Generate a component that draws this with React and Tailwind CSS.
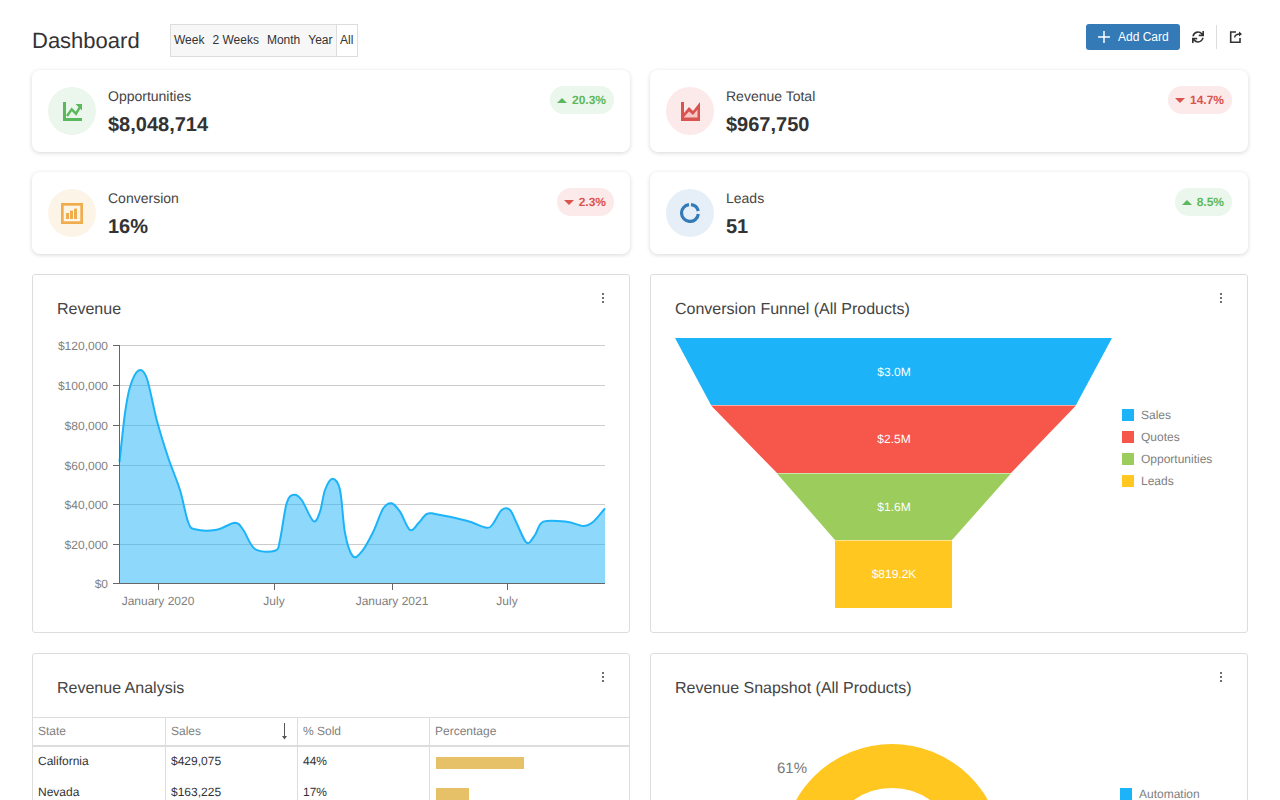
import React from 'react';
import { FaSync } from 'react-icons/fa';

const stats = [
  [
    { label: 'Opportunities', value: '$8,048,714', change: '20.3%', up: true, circle: 'bg-[#ebf6ec]', icon: <TrendIcon /> },
    { label: 'Revenue Total', value: '$967,750', change: '14.7%', up: false, circle: 'bg-[#fce9e9]', icon: <AreaIcon /> },
  ],
  [
    { label: 'Conversion', value: '16%', change: '2.3%', up: false, circle: 'bg-[#fdf4e8]', icon: <BarsIcon /> },
    { label: 'Leads', value: '51', change: '8.5%', up: true, circle: 'bg-[#e6eff7]', icon: <RingIcon /> },
  ],
];

// traced from the revenue series, page coordinates
const curve = [
  [119.5, 462], [125, 413], [130, 387], [138.3, 370.7], [146.7, 378], [156.7, 420], [168.3, 458], [180, 490],
  [188, 521.7], [195, 529.3], [216.7, 529.7], [235, 522.7], [243.3, 530], [255, 549], [275, 550.7], [280, 540],
  [286.7, 503], [294, 494.7], [301.7, 500], [313.3, 521], [320, 511.7], [325, 490], [332.5, 478.7], [340, 490],
  [345, 533], [352.7, 556], [361.7, 551.7], [373.3, 531.7], [383.3, 508.3], [391.7, 503.3], [400, 511.7],
  [410, 530], [418.3, 523.3], [426.7, 514], [435, 514], [466.7, 520.7], [486.7, 527.7], [493.3, 523.3],
  [501.7, 510], [510, 510], [516.7, 523.3], [526.7, 542.7], [535, 535], [543.3, 521.7], [566.7, 521.7],
  [583.3, 526], [593.3, 521.7], [605, 508.3],
];

function smooth(points) {
  let d = `M${points[0][0]} ${points[0][1]}`;
  for (let i = 0; i < points.length - 1; i++) {
    const p0 = points[i - 1] || points[i];
    const p1 = points[i];
    const p2 = points[i + 1];
    const p3 = points[i + 2] || p2;
    const c1 = [p1[0] + (p2[0] - p0[0]) / 6, p1[1] + (p2[1] - p0[1]) / 6];
    const c2 = [p2[0] - (p3[0] - p1[0]) / 6, p2[1] - (p3[1] - p1[1]) / 6];
    d += `C${c1[0].toFixed(1)} ${c1[1].toFixed(1)} ${c2[0].toFixed(1)} ${c2[1].toFixed(1)} ${p2[0]} ${p2[1]}`;
  }
  return d;
}

const yTicks = [
  ['$120,000', 345.5], ['$100,000', 385.5], ['$80,000', 425.5], ['$60,000', 465.5], ['$40,000', 504.5], ['$20,000', 544.5], ['$0', 583.5],
];
const xTicks = [['January 2020', 158.5], ['July', 274.5], ['January 2021', 392.5], ['July', 507.5]];

const funnelLegend = [
  ['Sales', 'bg-[#1db3f8]'],
  ['Quotes', 'bg-[#f6574a]'],
  ['Opportunities', 'bg-[#9ccc5c]'],
  ['Leads', 'bg-[#ffc720]'],
];

const rows = [
  { state: 'California', sales: '$429,075', sold: '44%', bar: 'w-[88px]' },
  { state: 'Nevada', sales: '$163,225', sold: '17%', bar: 'w-[33px]' },
];

function TrendIcon() {
  return (
    <svg width="19" height="19" viewBox="0 0 19 19" fill="none">
      <path d="M1.500 0v17.500H19" stroke="#5cb85c" strokeWidth="3" />
      <path d="M4 14l4.700-6.700 4.300 4.400 4.500-7.500" stroke="#5cb85c" strokeWidth="2.400" />
      <path d="M12.500 2H19V8.500z" fill="#5cb85c" />
    </svg>
  );
}

function AreaIcon() {
  return (
    <svg width="19" height="19" viewBox="0 0 19 19">
      <path d="M0 0H3V11L8 5L12 9L19 0V19H0Z" fill="#d9534f" />
      <path d="M3 15L8 9.500L12 13L16.500 7.500V15.500H3Z" fill="#f6c9c7" />
    </svg>
  );
}

function BarsIcon() {
  return (
    <svg width="22" height="21" viewBox="0 0 22 21">
      <rect x="1.350" y="1.350" width="19.300" height="18.300" fill="none" stroke="#f0ad4e" strokeWidth="2.700" />
      <rect x="5" y="10" width="3" height="6" fill="#f0ad4e" />
      <rect x="9" y="7.600" width="3" height="8.400" fill="#f0ad4e" />
      <rect x="13" y="5.600" width="3" height="10.400" fill="#f0ad4e" />
    </svg>
  );
}

function RingIcon() {
  return (
    <svg width="20" height="20" viewBox="0 0 20 20" fill="none" stroke="#337ab7" strokeWidth="3.200">
      <path d="M9 1.700A8.400 8.400 0 1 0 18.300 11" />
      <path d="M11 1.700A8.400 8.400 0 0 1 18.300 8" />
    </svg>
  );
}

function ExportIcon() {
  return (
    <svg width="14" height="14" viewBox="0 0 14 14" fill="none" stroke="#333" strokeWidth="1.600">
      <path d="M7 2H1.700v10.300H11V8" />
      <path d="M5.500 7.500C6 5 8 4 11 4" strokeWidth="1.300" />
      <path d="M10 1.500L13 4l-3 2.500" fill="#333" stroke="none" />
    </svg>
  );
}

function Kebab() {
  return (
    <svg width="4" height="10" viewBox="0 0 4 10" className="-mt-[7px] shrink-0" fill="#222">
      <rect x="1.200" y="0.200" width="1.600" height="1.600" />
      <rect x="1.200" y="4.200" width="1.600" height="1.600" />
      <rect x="1.200" y="8.200" width="1.600" height="1.600" />
    </svg>
  );
}

function StatCard({ label, value, change, up, circle, icon }) {
  return (
    <div className="flex h-[82px] items-start justify-between rounded-lg bg-white px-4 pt-4 shadow-[0_1px_4px_rgba(0,0,0,0.16)]">
      <div className="flex gap-3">
        <div className={`mt-px flex h-12 w-12 items-center justify-center rounded-full ${circle}`}>{icon}</div>
        <div>
          <div className="text-sm leading-5 text-[#444]">{label}</div>
          <div className="mt-[3px] text-xl leading-8 font-bold text-[#333]">{value}</div>
        </div>
      </div>
      <div className={`flex h-7 items-center gap-[5px] rounded-full pr-2 pl-[7px] text-xs font-bold ${up ? 'bg-[#ebf6ec] text-[#5cb85c]' : 'bg-[#fce9e9] text-[#d9534f]'}`}>
        <svg width="10" height="5" viewBox="0 0 10 5" fill="currentColor">
          <path d={up ? 'M0 5L5 0l5 5z' : 'M0 0h10L5 5z'} />
        </svg>
        {change}
      </div>
    </div>
  );
}

function Panel({ title, children }) {
  return (
    <div className="h-[359px] rounded-[3px] border border-[#ddd] bg-white">
      <div className="flex items-start justify-between px-6 pt-[25px]">
        <div className="text-base leading-5 text-[#444]">{title}</div>
        <Kebab />
      </div>
      {children}
    </div>
  );
}

function RevenueChart() {
  const line = smooth(curve);
  return (
    <svg className="block" width="596" height="312" viewBox="33 320 596 312">
      {yTicks.map(([label, y]) => (
        <g key={label}>
          <line x1="113" x2="119" y1={y} y2={y} stroke="#666" />
          {y !== 583.5 && <line x1="119" x2="605" y1={y} y2={y} stroke="#ccc" />}
          <text x="108" y={y + 4} textAnchor="end" fontSize="12" fill="#808080">{label}</text>
        </g>
      ))}
      <path d={`${line}L605 583.500L119.500 583.500Z`} fill="#1db3f8" fillOpacity="0.5" />
      <path d={line} fill="none" stroke="#1db3f8" strokeWidth="2" />
      <line x1="119.500" x2="119.500" y1="345" y2="584" stroke="#666" />
      <line x1="119" x2="605" y1="583.500" y2="583.500" stroke="#666" />
      {xTicks.map(([label, x], i) => (
        <g key={i}>
          <line x1={x} x2={x} y1="584" y2="590" stroke="#666" />
          <text x={x - 0.5} y="605" textAnchor="middle" fontSize="12" fill="#808080">{label}</text>
        </g>
      ))}
    </svg>
  );
}

function Funnel() {
  return (
    <svg className="block shrink-0" width="437" height="270" viewBox="675 338 437 270">
      <polygon points="675,338 1112,338 1076,405 711,405" fill="#1db3f8" />
      <polygon points="711,405.500 1076,405.500 1011,473 777,473" fill="#f6574a" />
      <polygon points="777,473.500 1011,473.500 952,540 835,540" fill="#9ccc5c" />
      <rect x="835" y="540.500" width="117" height="67.500" fill="#ffc720" />
      <g fontSize="12" fill="#fff" textAnchor="middle">
        <text x="894" y="376">$3.0M</text>
        <text x="894" y="443">$2.5M</text>
        <text x="894" y="511">$1.6M</text>
        <text x="894" y="578">$819.2K</text>
      </g>
    </svg>
  );
}

function RevenueTable() {
  return (
    <table className="mt-[18px] w-full table-fixed border-separate border-spacing-0 text-xs">
      <colgroup>
        <col className="w-[133px]" />
        <col className="w-[132px]" />
        <col className="w-[132px]" />
        <col />
      </colgroup>
      <thead>
        <tr className="h-[30px] text-left text-[#808080]">
          <th className="border-t border-r border-b-2 border-[#ddd] px-[5px] pb-px font-normal">State</th>
          <th className="border-t border-r border-b-2 border-[#ddd] px-[5px] pb-px font-normal">
            <div className="flex items-center justify-between pr-1">
              Sales
              <svg width="7" height="17" viewBox="0 0 7 17" fill="none" stroke="#555">
                <path d="M3.500 0v15" />
                <path d="M1 13l2.500 3.500L6 13z" fill="#555" stroke="none" />
              </svg>
            </div>
          </th>
          <th className="border-t border-r border-b-2 border-[#ddd] px-[5px] pb-px font-normal">% Sold</th>
          <th className="border-t border-b-2 border-[#ddd] px-[5px] pb-px font-normal">Percentage</th>
        </tr>
      </thead>
      <tbody className="text-[#333]">
        {rows.map(r => (
          <tr key={r.state} className="h-[31px]">
            <td className="border-r border-[#ddd] px-[5px] pt-[6px] align-top">{r.state}</td>
            <td className="border-r border-[#ddd] px-[5px] pt-[6px] align-top">{r.sales}</td>
            <td className="border-r border-[#ddd] px-[5px] pt-[6px] align-top">{r.sold}</td>
            <td className="px-1.5 pt-[10px] align-top">
              <div className={`h-3 bg-[#e6c168] ${r.bar}`} />
            </td>
          </tr>
        ))}
      </tbody>
    </table>
  );
}

export default function App() {
  return (
    <div className="h-[800px] overflow-hidden bg-white px-8 font-['Liberation_Sans',Arial,sans-serif] [text-rendering:geometricPrecision]">
      <div className="flex h-[70px] items-start justify-between pt-6">
        <div className="flex items-start gap-[30px]">
          <h1 className="w-[108px] text-[22px] leading-[34px] whitespace-nowrap text-[#333]">Dashboard</h1>
          <div className="flex h-[33px] w-[188px] items-center border border-[#ddd] text-xs text-[#333]">
            <div className="flex h-full w-[165px] items-center whitespace-nowrap bg-[#f7f7f7] pb-px">
              <button className="pr-1 pl-[3px]">Week</button>
              <button className="px-1">2 Weeks</button>
              <button className="px-1">Month</button>
              <button className="pl-1">Year</button>
            </div>
            <button className="h-full border-l border-[#ddd] pb-px pl-[3px]">All</button>
          </div>
        </div>
        <div className="flex h-[26px] items-center pr-[5px]">
          <button className="flex h-[26px] w-[94px] items-center gap-2 rounded-[3px] bg-[#337ab7] pl-3 text-xs text-white">
            <svg width="12" height="12" viewBox="0 0 12 12" stroke="#fff" strokeWidth="1.500">
              <path d="M6 0v12M0 6h12" />
            </svg>
            Add Card
          </button>
          <FaSync size={12} className="mx-3 text-[#333]" />
          <div className="mr-3 h-6 w-px bg-[#ddd]" />
          <ExportIcon />
        </div>
      </div>

      <div className="flex flex-col gap-5">
        {stats.map((row, i) => (
          <div key={i} className="grid grid-cols-2 gap-5">
            {row.map(s => <StatCard key={s.label} {...s} />)}
          </div>
        ))}

        <div className="grid grid-cols-2 gap-5">
          <Panel title="Revenue">
            <RevenueChart />
          </Panel>
          <Panel title="Conversion Funnel (All Products)">
            <div className="mt-[18px] flex px-6">
              <Funnel />
              <div className="mb-[50px] ml-[10px] flex flex-col justify-center text-xs text-[#808080]">
                {funnelLegend.map(([label, color]) => (
                  <div key={label} className="flex h-[22px] items-center gap-[7px]">
                    <span className={`h-3 w-3 ${color}`} />
                    {label}
                  </div>
                ))}
              </div>
            </div>
          </Panel>
        </div>

        <div className="grid grid-cols-2 gap-5">
          <Panel title="Revenue Analysis">
            <RevenueTable />
          </Panel>
          <Panel title="Revenue Snapshot (All Products)">
            <div className="mt-5 flex px-6">
              <svg className="block shrink-0" width="421" height="300" viewBox="675 719 421 300">
                <circle cx="892" cy="854" r="88" fill="none" stroke="#ffc720" strokeWidth="44" />
                <text x="792" y="773" textAnchor="middle" fontSize="15" fill="#777">61%</text>
              </svg>
              <div className="mt-[69px] ml-6 flex h-3 items-center gap-[7px] text-xs text-[#808080]">
                <span className="h-3 w-3 bg-[#1db3f8]" />
                Automation
              </div>
            </div>
          </Panel>
        </div>
      </div>
    </div>
  );
}
